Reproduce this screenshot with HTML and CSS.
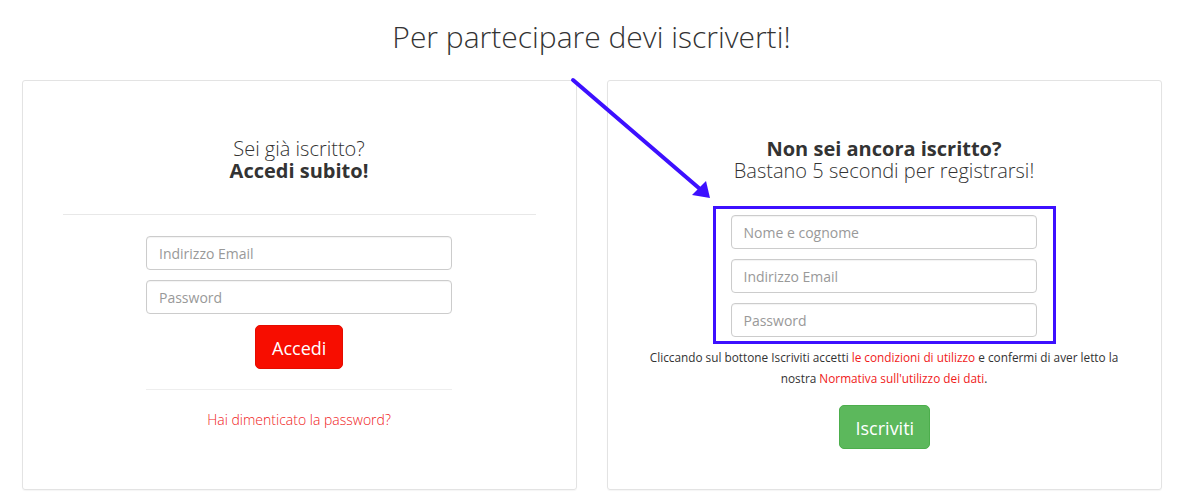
FILE: index.html
```html
<!DOCTYPE html>
<html lang="it">
<head>
<meta charset="utf-8">
<title>Iscriviti</title>
<link rel="stylesheet" href="styles.css">
</head>
<body>
<div class="page">
  <h1 class="title">Per partecipare devi iscriverti!</h1>
  <div class="row">
    <div class="card card-login">
      <div class="heading">
        <div class="light">Sei già iscritto?</div>
        <div class="bold">Accedi subito!</div>
      </div>
      <hr class="sep">
      <div class="form">
        <input class="field" type="text" placeholder="Indirizzo Email">
        <input class="field" type="password" placeholder="Password">
        <div class="btn-wrap"><button class="btn btn-red">Accedi</button></div>
        <hr class="sep-small">
        <div class="forgot"><a href="#">Hai dimenticato la password?</a></div>
      </div>
    </div>
    <div class="card card-register">
      <div class="heading">
        <div class="bold">Non sei ancora iscritto?</div>
        <div class="light">Bastano 5 secondi per registrarsi!</div>
      </div>
      <div class="highlight">
        <input class="field" type="text" placeholder="Nome e cognome">
        <input class="field" type="text" placeholder="Indirizzo Email">
        <input class="field" type="password" placeholder="Password">
      </div>
      <p class="terms">Cliccando sul bottone Iscriviti accetti <a href="#">le condizioni di utilizzo</a> e confermi di aver letto la nostra <a href="#">Normativa sull'utilizzo dei dati</a>.</p>
      <div class="btn-wrap"><button class="btn btn-green">Iscriviti</button></div>
    </div>
  </div>
  <svg class="arrow" width="1183" height="500" viewBox="0 0 1183 500">
    <line x1="573" y1="80" x2="700" y2="189" stroke="#3d10ff" stroke-width="4" stroke-linecap="round"/>
    <polygon points="710,198 692,195 706,181" fill="#3d10ff"/>
  </svg>
</div>
</body>
</html>
```

FILE: styles.css
```css
* { box-sizing: border-box; }
html, body { margin: 0; padding: 0; background: #fff; }
body {
  font-family: "Open Sans", "Liberation Sans", sans-serif;
  color: #333;
  font-size: 14px;
}
.page {
  position: relative;
  width: 1183px;
  height: 500px;
  overflow: hidden;
}
.title {
  margin: 20px 0 27px;
  font-size: 30px;
  line-height: 33px;
  font-weight: 300;
  text-align: center;
  color: #333;
}
.row {
  display: flex;
  gap: 30px;
  padding: 0 21.5px 0 21.5px;
}
.card {
  width: 555px;
  height: 410px;
  border: 1px solid #e3e3e3;
  border-radius: 3px;
  box-shadow: 0 1px 1px rgba(0,0,0,0.04);
  padding: 57px 40px 0;
  display: flex;
  flex-direction: column;
  align-items: center;
}
.heading {
  text-align: center;
  font-size: 20px;
  line-height: 22px;
  color: #333;
}
.light { font-weight: 300; }
.bold { font-weight: 700; }
.sep {
  width: 100%;
  border: 0;
  border-top: 1px solid #e8e8e8;
  margin: 32px 0 21px;
}
.form {
  width: 306px;
  display: flex;
  flex-direction: column;
}
.field {
  display: block;
  width: 306px;
  height: 34px;
  padding: 6px 12px;
  font-family: "Open Sans", "Liberation Sans", sans-serif;
  font-size: 14px;
  color: #555;
  border: 1px solid #ccc;
  border-radius: 4px;
  box-shadow: inset 0 1px 1px rgba(0,0,0,0.05);
  outline: none;
  margin: 0 0 10px;
}
.field::placeholder { color: #999; }
.btn-wrap { display: flex; justify-content: center; }
.btn {
  font-family: "Open Sans", "Liberation Sans", sans-serif;
  font-size: 18px;
  line-height: 24px;
  height: 44px;
  padding: 10px 16px;
  border: 1px solid transparent;
  border-radius: 5px;
  color: #fff;
  cursor: pointer;
}
.btn-red {
  background: #f70d00;
  border-color: #e40c00;
  margin-top: 1px;
  width: 88px;
}
.btn-green {
  background: #5cb85c;
  border-color: #4cae4c;
  width: 91px;
}
.sep-small {
  width: 100%;
  border: 0;
  border-top: 1px solid #eee;
  margin: 20px 0 20px;
}
.forgot {
  text-align: center;
  font-size: 14px;
  font-weight: 300;
  line-height: 20px;
}
.forgot a, .terms a { color: #f01a1a; text-decoration: none; }
.card-register .heading { margin-bottom: 24px; }
.highlight {
  width: 343px;
  border: 3px solid #3d10ff;
  padding: 6px 16px 0 15px;
}
.highlight .field:last-child { margin-bottom: 4px; }
.terms {
  margin: 3px -3px 16px;
  font-size: 11.8px;
  line-height: 21px;
  text-align: center;
  color: #333;
}
.arrow {
  position: absolute;
  left: 0;
  top: 0;
  pointer-events: none;
}
```
